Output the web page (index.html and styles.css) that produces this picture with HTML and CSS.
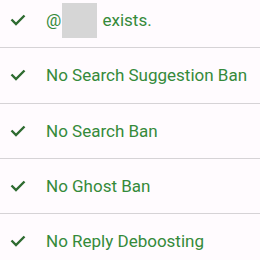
FILE: index.html
```html
<!DOCTYPE html>
<html>
<head>
<meta charset="utf-8">
<link rel="stylesheet" href="styles.css">
</head>
<body>
<ul class="list">
  <li class="row">
    <svg class="check" viewBox="0 0 16 12"><path d="M1.5 5.5 L6 10 L14.5 1.5"/></svg>
    <span class="label">@<span class="redact"></span> exists.</span>
  </li>
  <li class="row">
    <svg class="check" viewBox="0 0 16 12"><path d="M1.5 5.5 L6 10 L14.5 1.5"/></svg>
    <span class="label">No Search Suggestion Ban</span>
  </li>
  <li class="row">
    <svg class="check" viewBox="0 0 16 12"><path d="M1.5 5.5 L6 10 L14.5 1.5"/></svg>
    <span class="label">No Search Ban</span>
  </li>
  <li class="row">
    <svg class="check" viewBox="0 0 16 12"><path d="M1.5 5.5 L6 10 L14.5 1.5"/></svg>
    <span class="label">No Ghost Ban</span>
  </li>
  <li class="row">
    <svg class="check" viewBox="0 0 16 12"><path d="M1.5 5.5 L6 10 L14.5 1.5"/></svg>
    <span class="label">No Reply Deboosting</span>
  </li>
</ul>
</body>
</html>
```
FILE: styles.css
```css
html, body {
  margin: 0;
  padding: 0;
  background: #fffbfe;
}
body {
  font-family: Roboto, "Noto Sans", sans-serif;
  overflow: hidden;
}
.list {
  list-style: none;
  margin: -7px 0 0 0;
  padding: 0;
}
.row {
  height: 54.33px;
  display: flex;
  align-items: center;
  border-bottom: 1px solid #d6d3d6;
}
.check {
  width: 16px;
  height: 12px;
  fill: none;
  stroke: #2e6b30;
  stroke-width: 2.4;
  margin-left: 10px;
  margin-right: 20px;
  flex: none;
}
.label {
  font-size: 17px;
  color: #358a3a;
  display: flex;
  align-items: center;
  white-space: pre;
}
.redact {
  display: inline-block;
  width: 35px;
  height: 35px;
  background: #d6d6d6;
  margin-left: 1px;
  margin-right: 1px;
}
```
